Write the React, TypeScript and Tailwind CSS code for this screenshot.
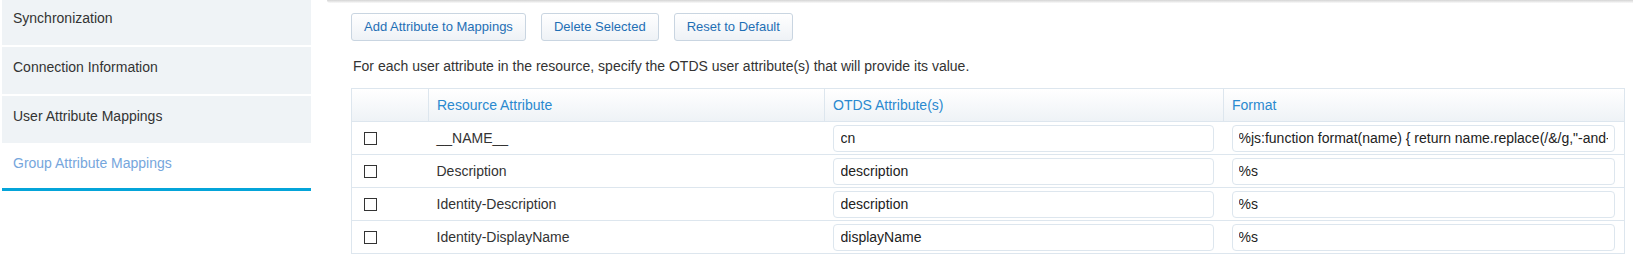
const navItems = [
  { label: "Synchronization", active: false },
  { label: "Connection Information", active: false },
  { label: "User Attribute Mappings", active: false },
  { label: "Group Attribute Mappings", active: true },
];

const rows = [
  { attr: "__NAME__", otds: "cn", format: '%js:function format(name) { return name.replace(/&/g,"-and-"); }' },
  { attr: "Description", otds: "description", format: "%s" },
  { attr: "Identity-Description", otds: "description", format: "%s" },
  { attr: "Identity-DisplayName", otds: "displayName", format: "%s" },
];

const buttons = ["Add Attribute to Mappings", "Delete Selected", "Reset to Default"];

function Sidebar() {
  return (
    <div className="w-[309px] ml-[2px] shrink-0 flex flex-col -mt-[2px]">
      {navItems.map((item, i) =>
        item.active ? (
          <div
            key={i}
            className="h-[46px] pl-[11px] pt-[9px] text-[14px] leading-[18px] text-[#76a6dc] bg-white border-b-[3px] border-[#04a4d9]"
          >
            {item.label}
          </div>
        ) : (
          <div
            key={i}
            className="h-[47px] mb-[2px] pl-[11px] pt-[11px] text-[14px] leading-[18px] text-[#333] bg-[#eff3f6]"
          >
            {item.label}
          </div>
        )
      )}
    </div>
  );
}

export default function App() {
  return (
    <div
      className="flex w-[1633px] h-[261px] bg-white overflow-hidden"
      style={{ fontFamily: "'Liberation Sans', Arial, sans-serif" }}
    >
      <Sidebar />
      <div className="flex-1 ml-[16px] flex flex-col">
        <div className="h-[3px] rounded-bl-[4px] bg-gradient-to-b from-[#d4d4d4] to-[#fafafa]" />
        <div className="pl-[24px] pr-[9px]">
          <div className="flex gap-[15px] mt-[10px]">
            {buttons.map((b) => (
              <button
                key={b}
                className="h-[28px] px-[12px] text-[13px] text-[#1f6fb5] border border-[#c9d5e1] rounded-[3px] bg-gradient-to-b from-white to-[#eef2f6]"
              >
                {b}
              </button>
            ))}
          </div>
          <p className="mt-[16px] ml-[2px] text-[14px] leading-[18px] text-[#333]">
            For each user attribute in the resource, specify the OTDS user attribute(s) that will provide its value.
          </p>
          <table className="mt-[13px] w-[1273px] table-fixed border-collapse border border-[#dde6ee] text-[14px] text-[#333]">
            <colgroup>
              <col className="w-[77px]" />
              <col className="w-[396px]" />
              <col className="w-[399px]" />
              <col className="w-[401px]" />
            </colgroup>
            <thead>
              <tr className="h-[33px] bg-gradient-to-b from-white to-[#eef2f6] text-[#2a89cf]">
                <th className="border-r border-[#dde6ee]" />
                <th className="border-r border-[#dde6ee] pl-[8px] text-left font-normal">Resource Attribute</th>
                <th className="border-r border-[#dde6ee] pl-[8px] text-left font-normal">OTDS Attribute(s)</th>
                <th className="pl-[8px] text-left font-normal">Format</th>
              </tr>
            </thead>
            <tbody>
              {rows.map((r) => (
                <tr key={r.attr} className="h-[33px] border-t border-[#dde6ee]">
                  <td className="pl-[12px]">
                    <span className="block w-[13px] h-[13px] border border-[#333] bg-white" />
                  </td>
                  <td className="pl-[8px]">{r.attr}</td>
                  <td className="pl-[8px] pr-[10px] py-[2px]">
                    <input
                      readOnly
                      value={r.otds}
                      className="block w-full h-[27px] px-[7px] border border-[#dde6ee] rounded-[4px] text-[14px] text-[#222] outline-none"
                    />
                  </td>
                  <td className="pl-[8px] pr-[9px] py-[2px]">
                    <input
                      readOnly
                      value={r.format}
                      className="block w-full h-[27px] px-[6px] border border-[#dde6ee] rounded-[4px] text-[14px] text-[#222] outline-none"
                    />
                  </td>
                </tr>
              ))}
            </tbody>
          </table>
        </div>
      </div>
    </div>
  );
}
